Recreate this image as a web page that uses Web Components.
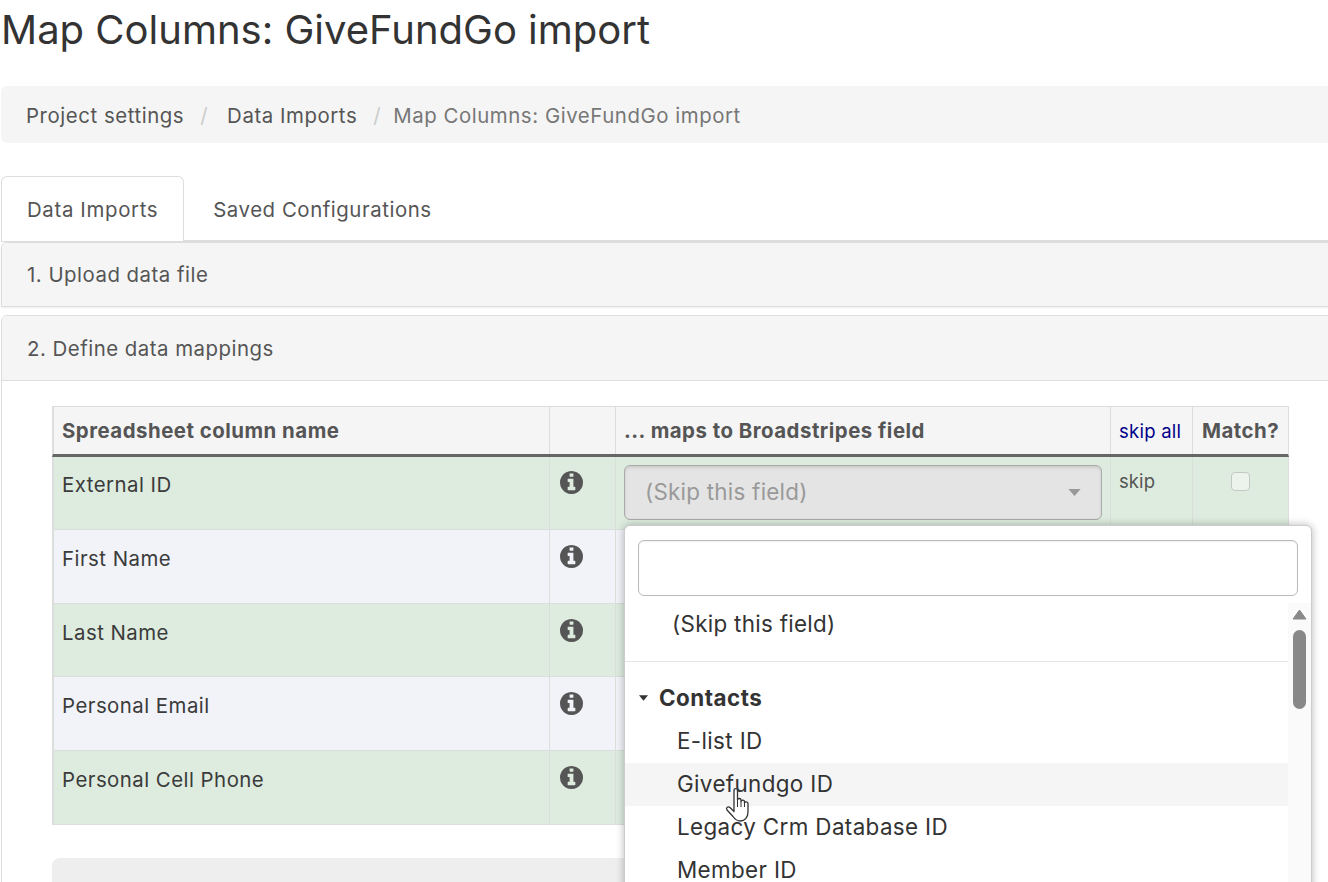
<!DOCTYPE html>
<html lang="en">
<head>
<meta charset="utf-8">
<title>Map Columns: GiveFundGo import</title>
<style>
  html, body { height: 100%; margin: 0; overflow: hidden; background: #fff; }
  body { font-family: Inter, "Liberation Sans", sans-serif; color: #333; }
</style>
</head>
<body>
<import-page>
  <page-title>Map Columns: GiveFundGo import</page-title>
  <bread-crumbs>
    <crumb-link gap="19">Project settings</crumb-link>
    <crumb-link gap="12">Data Imports</crumb-link>
    <crumb-link current>Map Columns: GiveFundGo import</crumb-link>
  </bread-crumbs>
  <tab-bar>
    <tab-item active>Data Imports</tab-item>
    <tab-item>Saved Configurations</tab-item>
  </tab-bar>
  <step-panel heading="1. Upload data file"></step-panel>
  <step-panel heading="2. Define data mappings" open>
    <mapping-head></mapping-head>
    <mapping-row tone="green" first>External ID</mapping-row>
    <mapping-row tone="blue">First Name</mapping-row>
    <mapping-row tone="green">Last Name</mapping-row>
    <mapping-row tone="blue">Personal Email</mapping-row>
    <mapping-row tone="green">Personal Cell Phone</mapping-row>
    <note-box></note-box>
  </step-panel>
  <field-dropdown slot="overlay"></field-dropdown>
  <hand-cursor slot="overlay"></hand-cursor>
</import-page>

<script>
// small helper so each class only has to carry its markup
function shadow(el, html) {
  el.attachShadow({ mode: "open" }).innerHTML = html;
}

const COLUMNS = "496px 66px 495px 82px 96px";

const INFO_PATH = "M1152 1376v-160q0-14-9-23t-23-9h-96v-512q0-14-9-23t-23-9h-320q-14 0-23 9t-9 23v160q0 14 9 23t23 9h96v320h-96q-14 0-23 9t-9 23v160q0 14 9 23t23 9h448q14 0 23-9t9-23zm-128-896v-160q0-14-9-23t-23-9h-192q-14 0-23 9t-9 23v160q0 14 9 23t23 9h192q14 0 23-9t9-23zm640 416q0 209-103 385.5t-279.5 279.5-385.5 103-385.5-103-279.5-279.5-103-385.5 103-385.5 279.5-279.5 385.5-103 385.5 103 279.5 279.5 103 385.5z";

class ImportPage extends HTMLElement {
  connectedCallback() {
    shadow(this, `
      <style>
        :host { display: block; position: relative; width: 1340px; height: 882px; padding-left: 1px; box-sizing: border-box; overflow: hidden; }
      </style>
      <slot></slot>
      <slot name="overlay"></slot>`);
  }
}

class PageTitle extends HTMLElement {
  connectedCallback() {
    shadow(this, `
      <style>
        :host { display: block; padding: 7px 0 0 0; height: 79px; box-sizing: border-box; }
        h1 { margin: 0; font: 400 40px/46px Inter, sans-serif; color: #333; }
      </style>
      <h1><slot></slot></h1>`);
  }
}

class BreadCrumbs extends HTMLElement {
  connectedCallback() {
    shadow(this, `
      <style>
        :host { display: flex; align-items: center; height: 57px; padding: 2px 25px 0; margin-top: 7px; background: #f5f5f5; border-radius: 6px; box-sizing: border-box; }
      </style>
      <slot></slot>`);
  }
}

class CrumbLink extends HTMLElement {
  connectedCallback() {
    const current = this.hasAttribute("current");
    shadow(this, `
      <style>
        :host { display: inline-block; font-size: 20.4px; letter-spacing: .56px; color: ${current ? "#777" : "#555"}; white-space: nowrap; }
        i { font-style: normal; color: #ccc; padding: 0 ${this.getAttribute("gap")}px 0 16px; }
      </style>
      <slot></slot>${current ? "" : "<i>/</i>"}`);
  }
}

class TabBar extends HTMLElement {
  connectedCallback() {
    shadow(this, `
      <style>
        :host { display: flex; height: 66px; margin-top: 33px; border-bottom: 2px solid #ddd; box-sizing: border-box; }
      </style>
      <slot></slot>`);
  }
}

class TabItem extends HTMLElement {
  connectedCallback() {
    const active = this.hasAttribute("active");
    shadow(this, `
      <style>
        :host { display: flex; align-items: center; height: 65px; padding: ${active ? 0 : 2}px 25px 0 ${active ? 25 : 29}px; font-size: 20.4px; letter-spacing: ${active ? .65 : .55}px; color: #555; box-sizing: border-box; white-space: nowrap;
          ${active ? "background: #fff; border: 1px solid #ddd; border-bottom: 0; border-radius: 6px 6px 0 0;" : ""} }
      </style>
      <slot></slot>`);
  }
}

class StepPanel extends HTMLElement {
  connectedCallback() {
    const open = this.hasAttribute("open");
    shadow(this, `
      <style>
        :host { display: block; margin-bottom: 8px; background: #fff; border: 1px solid #ddd; border-radius: 6px 6px 0 0; box-sizing: border-box; }
        :host(:not([open])) { height: 65px; box-shadow: 0 1px 2px rgba(0,0,0,.08); }
        header { height: ${open ? 65 : 63}px; padding-left: 25px; display: flex; align-items: center; box-sizing: border-box; background: #f5f5f5; font-size: 20.4px; letter-spacing: .5px; color: #555; border-radius: 6px 6px 0 0; ${open ? "border-bottom: 1px solid #ddd;" : ""} }
        .body { padding: 25px 0 0 50px; }
      </style>
      <header>${this.getAttribute("heading")}</header>
      ${open ? '<div class="body"><slot></slot></div>' : ""}`);
  }
}

class MappingHead extends HTMLElement {
  connectedCallback() {
    shadow(this, `
      <style>
        :host { display: grid; position: relative; z-index: 1; grid-template-columns: ${COLUMNS}; width: 1237px; height: 51px; box-sizing: border-box; background: #f5f5f5; border: solid #ddd; border-width: 1px 1px 0 1px; border-bottom: 3px solid #666; margin-bottom: -.6px; font-size: 20.4px; font-weight: 700; letter-spacing: .5px; color: #555; }
        div { display: flex; align-items: center; padding-left: 8px; border-left: 1px solid #ddd; white-space: nowrap; }
        div:first-child { border-left: 0; padding-left: 6px; letter-spacing: .6px; }
        div:last-child { padding-left: 9px; }
        a { color: #00008b; font-weight: 400; font-size: 18.5px; letter-spacing: .25px; }
      </style>
      <div>Spreadsheet column name</div>
      <div></div>
      <div>... maps to Broadstripes field</div>
      <div><a>skip all</a></div>
      <div>Match?</div>`);
  }
}

class MappingRow extends HTMLElement {
  connectedCallback() {
    const bg = this.getAttribute("tone") === "green" ? "#deecdf" : "#f1f3f9";
    const first = this.hasAttribute("first");
    shadow(this, `
      <style>
        :host { display: grid; grid-template-columns: ${COLUMNS}; width: 1237px; height: 73.7px; box-sizing: border-box; background: ${bg}; border: solid #ddd; border-width: 0 1px 1px 1px; font-size: 20.4px; letter-spacing: .47px; color: #3b3b3b; }
        .cell { border-left: 1px solid #d9dfd9; padding: 16px 0 0 8px; box-sizing: border-box; white-space: nowrap; }
        .cell:first-child { border-left: 0; padding-left: 6px; }
        .icon { padding: 15px 0 0 10px; }
        .pick { padding: 9px 8px 0 8px; }
        .skip { font-size: 18.5px; color: #555; padding-left: 8px; padding-top: 14px; letter-spacing: .1px; }
        .check { padding: 16px 0 0 38px; }
        .box { display: block; width: 19px; height: 19px; border: 1px solid #c4c8c4; border-radius: 4px; background: #ecf2ec; box-sizing: border-box; }
      </style>
      <div class="cell"><slot></slot></div>
      <div class="cell icon"><info-icon></info-icon></div>
      <div class="cell pick"><field-select>${first ? "(Skip this field)" : ""}</field-select></div>
      <div class="cell skip">${first ? "skip" : ""}</div>
      <div class="cell check">${first ? '<span class="box"></span>' : ""}</div>`);
  }
}

class InfoIcon extends HTMLElement {
  connectedCallback() {
    shadow(this, `
      <style>
        :host { display: block; width: 23px; height: 23px; }
        svg { display: block; width: 23px; height: 23px; fill: #555; }
      </style>
      <svg viewBox="128 128 1536 1536"><path d="${INFO_PATH}"/></svg>`);
  }
}

class FieldSelect extends HTMLElement {
  connectedCallback() {
    shadow(this, `
      <style>
        :host { display: flex; align-items: center; height: 55px; padding: 0 20px; background: #e4e4e4; border: 1px solid #aaa; border-radius: 6px; box-sizing: border-box; font-size: 22.4px; letter-spacing: .25px; color: #999; box-shadow: inset 0 2px 3px rgba(0,0,0,.1); }
        span { flex: 1; margin-top: -2px; }
        svg { width: 13px; height: 7px; fill: #999; }
      </style>
      <span><slot></slot></span>
      <svg viewBox="0 0 14 8"><path d="M0 0h14L7 8z"/></svg>`);
  }
}

class NoteBox extends HTMLElement {
  connectedCallback() {
    shadow(this, `
      <style>
        :host { display: block; height: 60px; margin-top: 33px; width: 1237px; background: #eee; border-radius: 8px 8px 0 0; }
      </style>`);
  }
}

class FieldDropdown extends HTMLElement {
  connectedCallback() {
    shadow(this, `
      <style>
        :host { position: absolute; z-index: 2; left: 624px; top: 525px; width: 688px; height: 400px; display: block; box-sizing: border-box; background: #fff; border: 1px solid #ccc; border-radius: 6px 6px 0 0; box-shadow: 0 0 8px rgba(0,0,0,.28); font-size: 22.4px; letter-spacing: .3px; color: #333; }
        .search { display: block; margin: 14px 13px 7px 13px; height: 56px; border: 1px solid #bbb; border-radius: 6px; box-sizing: border-box; box-shadow: inset 0 1px 2px rgba(0,0,0,.06); }
        .wrap { display: grid; grid-template-columns: 1fr 23px; }
        .skip-item { height: 59px; padding: 6px 0 0 47px; box-sizing: border-box; line-height: 30px; border-bottom: 1px solid #e5e5e5; }
        .group { display: flex; align-items: center; height: 43px; margin-top: 15px; padding: 0 0 2px 14px; box-sizing: border-box; font-weight: 700; letter-spacing: .5px; }
        .group svg { width: 9px; height: 6px; margin-right: 11px; fill: #333; }
        .item { height: 43px; padding: 9px 0 0 52px; box-sizing: border-box; line-height: 24px; letter-spacing: .37px; }
        .item.on { background: #f5f5f5; }
        .bar { background: #fafafa; }
        .up { display: block; width: 15px; height: 11px; margin: 6px 0 0 4px; fill: #888; stroke: #888; stroke-width: 1; stroke-linejoin: round; }
        .thumb { display: block; width: 13px; height: 79px; margin: 10px 0 0 5px; border-radius: 7px; background: #888; }
      </style>
      <div class="search"></div>
      <div class="wrap">
        <div>
          <div class="skip-item">(Skip this field)</div>
          <div class="group"><svg viewBox="0 0 10 6"><path d="M0 0h10L5 6z"/></svg>Contacts</div>
          <div class="item">E-list ID</div>
          <div class="item on">Givefundgo ID</div>
          <div class="item">Legacy Crm Database ID</div>
          <div class="item">Member ID</div>
        </div>
        <div class="bar">
          <svg class="up" viewBox="0 0 15 11"><path d="M7.500 1L14 10H1z"/></svg>
          <span class="thumb"></span>
        </div>
      </div>`);
  }
}

class HandCursor extends HTMLElement {
  connectedCallback() {
    shadow(this, `
      <style>
        :host { position: absolute; z-index: 3; left: 725px; top: 787px; width: 28px; height: 36px; display: block; }
        svg { display: block; width: 28px; height: 36px; }
      </style>
      <svg viewBox="0 0 28 36"><path d="M9 20V3.500c0-2.500 3.500-2.500 3.500 0V13c0-2 3.500-2 3.500 0v1.500c0-1.800 3.500-1.800 3.500 0V16c0-1.500 3.500-1.500 3.500.5V25c0 5-3 9-7.500 9-3.500 0-5.500-1.500-7.500-4.500L2 23c-1.500-2.500 1-4 3-2.500l4 4z" fill="#fff" stroke="#333" stroke-width="1.300" stroke-linejoin="round"/><path d="M12.500 13v7M16 14.500V20M19.500 16v4" fill="none" stroke="#333" stroke-width="1"/></svg>`);
  }
}

customElements.define("import-page", ImportPage);
customElements.define("page-title", PageTitle);
customElements.define("bread-crumbs", BreadCrumbs);
customElements.define("crumb-link", CrumbLink);
customElements.define("tab-bar", TabBar);
customElements.define("tab-item", TabItem);
customElements.define("step-panel", StepPanel);
customElements.define("mapping-head", MappingHead);
customElements.define("mapping-row", MappingRow);
customElements.define("info-icon", InfoIcon);
customElements.define("field-select", FieldSelect);
customElements.define("note-box", NoteBox);
customElements.define("field-dropdown", FieldDropdown);
customElements.define("hand-cursor", HandCursor);
</script>
</body>
</html>
